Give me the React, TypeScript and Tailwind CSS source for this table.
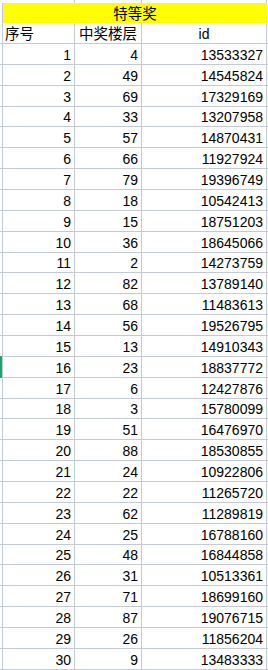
import React from "react";

const data: [number, number, number][] = [
  [1, 4, 13533327],
  [2, 49, 14545824],
  [3, 69, 17329169],
  [4, 33, 13207958],
  [5, 57, 14870431],
  [6, 66, 11927924],
  [7, 79, 19396749],
  [8, 18, 10542413],
  [9, 15, 18751203],
  [10, 36, 18645066],
  [11, 2, 14273759],
  [12, 82, 13789140],
  [13, 68, 11483613],
  [14, 56, 19526795],
  [15, 13, 14910343],
  [16, 23, 18837772],
  [17, 6, 12427876],
  [18, 3, 15780099],
  [19, 51, 16476970],
  [20, 88, 18530855],
  [21, 24, 10922806],
  [22, 22, 11265720],
  [23, 62, 11289819],
  [24, 25, 16788160],
  [25, 48, 16844858],
  [26, 31, 10513361],
  [27, 71, 18699160],
  [28, 87, 19076715],
  [29, 26, 11856204],
  [30, 9, 13483333],
];

const font = { fontFamily: '"Liberation Sans", "Noto Sans CJK SC", sans-serif' };

export default function App() {
  return (
    <div
      className="w-[268px] h-[670px] overflow-hidden bg-white text-black text-[14px] leading-[17px]"
      style={font}
    >
      {/* top strip */}
      <div className="grid grid-cols-[3px_72px_67px_125px_1px] h-[3px]">
        <div />
        <div className="border-r border-[#c3c9d6]" />
        <div className="border-r border-[#c3c9d6]" />
        <div className="border-r border-[#c3c9d6]" />
        <div />
      </div>
      {/* yellow merged title */}
      <div className="grid grid-cols-[3px_264px_1px] h-[20px]">
        <div className="border-r border-[#c3c9d6]" />
        <div className="bg-[#ffff00] flex items-end justify-center text-[14.5px]">特等奖</div>
        <div />
      </div>
      {/* header */}
      <div className="grid grid-cols-[3px_72px_67px_125px_1px] h-[21px] border-b border-[#c3c9d6] box-border">
        <div className="border-r border-[#c3c9d6]" />
        <div className="border-r border-[#c3c9d6] flex items-end pl-[2px] text-[14.5px]">序号</div>
        <div className="border-r border-[#c3c9d6] flex items-end pl-[4px] text-[14.5px]">中奖楼层</div>
        <div className="border-r border-[#c3c9d6] flex items-end justify-center">id</div>
        <div />
      </div>
      {data.map(([n, floor, id]) => (
        <div
          key={n}
          className="grid grid-cols-[3px_72px_67px_125px_1px] h-[20.866px] border-b border-[#c3c9d6] box-border"
        >
          <div className="border-r border-[#c3c9d6] relative">
            {n === 16 && <div className="absolute left-0 top-[-1px] bottom-[-1px] w-[2px] bg-[#21a366]" />}
          </div>
          <div className="border-r border-[#c3c9d6] flex items-end justify-end pr-[3px]">{n}</div>
          <div className="border-r border-[#c3c9d6] flex items-end justify-end pr-[3px]">{floor}</div>
          <div className="border-r border-[#c3c9d6] flex items-end justify-end pr-[3px]">{id}</div>
          <div />
        </div>
      ))}
    </div>
  );
}
